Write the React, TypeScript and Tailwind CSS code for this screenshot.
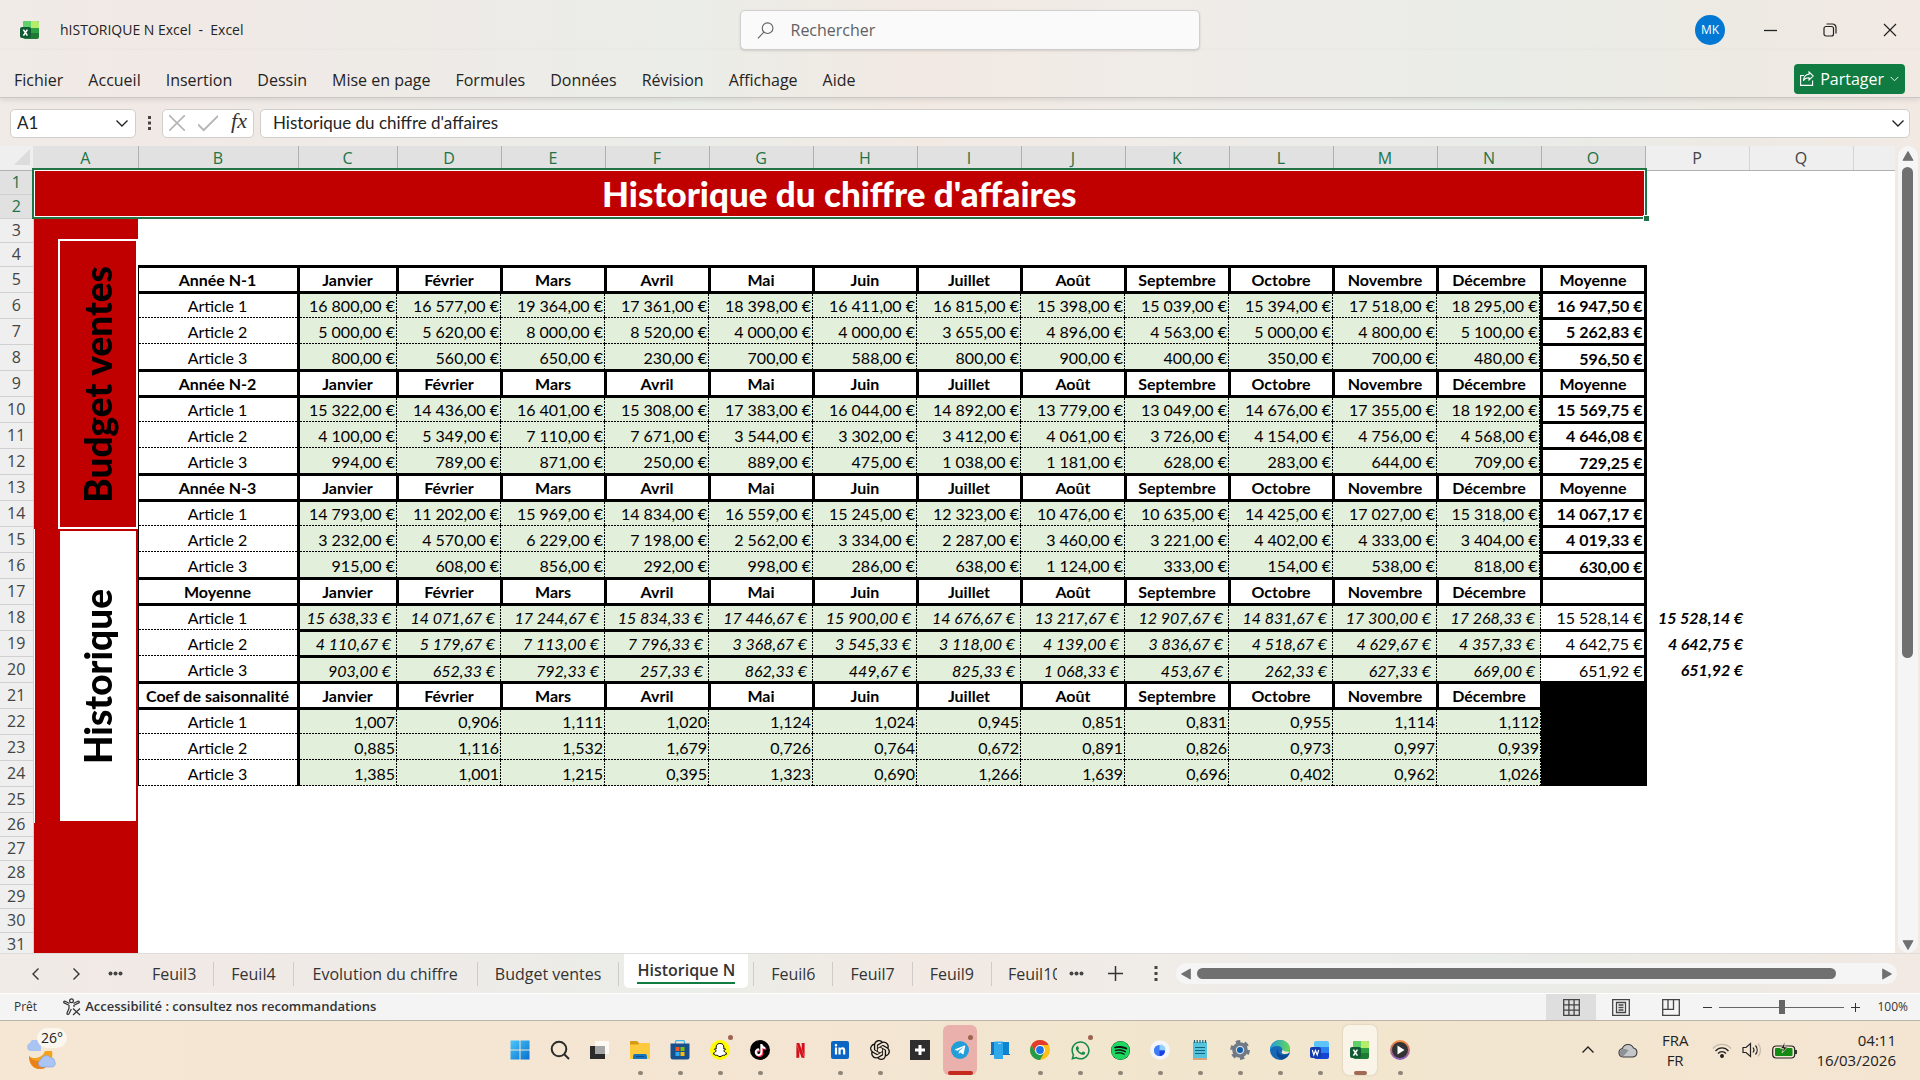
import * as React from 'react';
import clsx from 'clsx';
import { FaLinkedinIn, FaSnapchatGhost, FaSpotify, FaTelegramPlane, FaTiktok, FaWhatsapp } from 'react-icons/fa';
import { SiNetflix, SiOpenai } from 'react-icons/si';

const MENU = ['Fichier', 'Accueil', 'Insertion', 'Dessin', 'Mise en page', 'Formules', 'Données', 'Révision', 'Affichage', 'Aide'];
const LETTERS = 'ABCDEFGHIJKLMNOPQ'.split('');
const MONTHS = ['Janvier', 'Février', 'Mars', 'Avril', 'Mai', 'Juin', 'Juillet', 'Août', 'Septembre', 'Octobre', 'Novembre', 'Décembre'];

type BlockKind = 'year' | 'average' | 'coef';

interface Block {
  title: string;
  kind: BlockKind;
  total: string;
  rows: { values: string; total?: string }[];
}

// values are separated by "|", one per month
const BLOCKS: Block[] = [
  {
    title: 'Année N-1',
    kind: 'year',
    total: 'Moyenne',
    rows: [
      { values: '16 800,00|16 577,00|19 364,00|17 361,00|18 398,00|16 411,00|16 815,00|15 398,00|15 039,00|15 394,00|17 518,00|18 295,00', total: '16 947,50' },
      { values: '5 000,00|5 620,00|8 000,00|8 520,00|4 000,00|4 000,00|3 655,00|4 896,00|4 563,00|5 000,00|4 800,00|5 100,00', total: '5 262,83' },
      { values: '800,00|560,00|650,00|230,00|700,00|588,00|800,00|900,00|400,00|350,00|700,00|480,00', total: '596,50' },
    ],
  },
  {
    title: 'Année N-2',
    kind: 'year',
    total: 'Moyenne',
    rows: [
      { values: '15 322,00|14 436,00|16 401,00|15 308,00|17 383,00|16 044,00|14 892,00|13 779,00|13 049,00|14 676,00|17 355,00|18 192,00', total: '15 569,75' },
      { values: '4 100,00|5 349,00|7 110,00|7 671,00|3 544,00|3 302,00|3 412,00|4 061,00|3 726,00|4 154,00|4 756,00|4 568,00', total: '4 646,08' },
      { values: '994,00|789,00|871,00|250,00|889,00|475,00|1 038,00|1 181,00|628,00|283,00|644,00|709,00', total: '729,25' },
    ],
  },
  {
    title: 'Année N-3',
    kind: 'year',
    total: 'Moyenne',
    rows: [
      { values: '14 793,00|11 202,00|15 969,00|14 834,00|16 559,00|15 245,00|12 323,00|10 476,00|10 635,00|14 425,00|17 027,00|15 318,00', total: '14 067,17' },
      { values: '3 232,00|4 570,00|6 229,00|7 198,00|2 562,00|3 334,00|2 287,00|3 460,00|3 221,00|4 402,00|4 333,00|3 404,00', total: '4 019,33' },
      { values: '915,00|608,00|856,00|292,00|998,00|286,00|638,00|1 124,00|333,00|154,00|538,00|818,00', total: '630,00' },
    ],
  },
  {
    title: 'Moyenne',
    kind: 'average',
    total: '',
    rows: [
      { values: '15 638,33|14 071,67|17 244,67|15 834,33|17 446,67|15 900,00|14 676,67|13 217,67|12 907,67|14 831,67|17 300,00|17 268,33', total: '15 528,14' },
      { values: '4 110,67|5 179,67|7 113,00|7 796,33|3 368,67|3 545,33|3 118,00|4 139,00|3 836,67|4 518,67|4 629,67|4 357,33', total: '4 642,75' },
      { values: '903,00|652,33|792,33|257,33|862,33|449,67|825,33|1 068,33|453,67|262,33|627,33|669,00', total: '651,92' },
    ],
  },
  {
    title: 'Coef de saisonnalité',
    kind: 'coef',
    total: '',
    rows: [
      { values: '1,007|0,906|1,111|1,020|1,124|1,024|0,945|0,851|0,831|0,955|1,114|1,112' },
      { values: '0,885|1,116|1,532|1,679|0,726|0,764|0,672|0,891|0,826|0,973|0,997|0,939' },
      { values: '1,385|1,001|1,215|0,395|1,323|0,690|1,266|1,639|0,696|0,402|0,962|1,026' },
    ],
  },
];

const THICK = 'border-[3px] border-black';
const DASH_BOTTOM =
  'bg-[image:repeating-linear-gradient(90deg,#000_0_2px,transparent_2px_3px)] bg-[size:100%_1px] bg-[position:left_bottom] bg-no-repeat';
const DASH_RIGHT =
  'bg-[image:repeating-linear-gradient(#000_0_2px,transparent_2px_3px)] bg-[size:1px_100%] bg-[position:right_top] bg-no-repeat';
const DASH_BOTH =
  'bg-[image:repeating-linear-gradient(90deg,#000_0_2px,transparent_2px_3px),repeating-linear-gradient(#000_0_2px,transparent_2px_3px)] bg-[size:100%_1px,1px_100%] bg-[position:left_bottom,right_top] bg-no-repeat';

const ICON_BUTTON = 'flex items-center justify-center text-[#333]';

const ExcelLogo: React.FC<{ size: number }> = ({ size }) => (
  <svg width={size} height={size} viewBox="0 0 20 20" aria-hidden="true">
    <rect x="3" y="1" width="16" height="18" rx="2" fill="#1e7a35" />
    <path d="M5 1h6v7H3V3a2 2 0 0 1 2-2z" fill="#5fd06a" />
    <path d="M11 1h6a2 2 0 0 1 2 2v5h-8z" fill="#b5ec6c" />
    <path d="M11 8h8v5h-8z" fill="#2ea043" />
    <rect x="0" y="7" width="11" height="11" rx="2" fill="#0f5c34" />
    <path d="M3.4 9.6l4 6M7.4 9.6l-4 6" stroke="#fff" strokeWidth="1.6" />
  </svg>
);

const Chevron: React.FC<{ d: string; size?: number }> = ({ d, size = 14 }) => (
  <svg width={size} height={size} viewBox="0 0 14 14" fill="none" stroke="currentColor" strokeWidth="1.4" className="shrink-0" aria-hidden="true">
    <path d={d} />
  </svg>
);
const DOWN = 'M1.5 4.5L7 10l5.500-5.500';

const TitleBar = () => (
  <header className="flex h-[50px] items-center pt-2.5 pl-5">
    <div className="flex flex-1 items-center gap-5 text-sm whitespace-pre text-[#242424]">
      <ExcelLogo size={20} />
      <span>{'hISTORIQUE N Excel  -  Excel'}</span>
    </div>
    <label className="flex h-10 w-[460px] items-center gap-4 rounded-[5px] border border-[#d2d0ce] bg-[#fafafa] px-4 shadow-sm">
      <svg width="19" height="19" viewBox="0 0 19 19" fill="none" stroke="#616161" strokeWidth="1.2" aria-hidden="true">
        <circle cx="11.500" cy="7" r="5.800" />
        <path d="M7.500 11.200L1 18" />
      </svg>
      <input type="text" placeholder="Rechercher" aria-label="Rechercher" className="w-full bg-transparent text-base outline-none placeholder:text-[#616161]" />
    </label>
    <div className="flex flex-1 items-center justify-end">
      <button className="mr-[15px] size-[30px] rounded-full bg-[#0078d4] text-xs text-white">MK</button>
      <button aria-label="Réduire" className={clsx(ICON_BUTTON, 'w-[60px]')}>
        <svg width="13" height="13" viewBox="0 0 13 13" stroke="#222" strokeWidth="1.3"><path d="M0 6.500h13" /></svg>
      </button>
      <button aria-label="Restaurer" className={clsx(ICON_BUTTON, 'w-[60px]')}>
        <svg width="14" height="14" viewBox="0 0 14 14" fill="none" stroke="#222" strokeWidth="1.2">
          <rect x="1" y="3.500" width="9.500" height="9.500" rx="2" />
          <path d="M3.500 1h6A3.500 3.500 0 0 1 13 4.500v6" />
        </svg>
      </button>
      <button aria-label="Fermer" className={clsx(ICON_BUTTON, 'w-[60px]')}>
        <svg width="14" height="14" viewBox="0 0 14 14" stroke="#222" strokeWidth="1.2"><path d="M1 1l12 12M13 1L1 13" /></svg>
      </button>
    </div>
  </header>
);

const MenuBar = () => (
  <nav className="flex h-12 items-center justify-between border-b border-[#c9c6c3] pt-3 pr-[15px] pl-[14px] shadow-[0_2px_5px_rgba(0,0,0,0.1)]">
    <div className="flex gap-[25px] text-base text-[#242424]">
      {MENU.map((label) => (
        <button key={label}>{label}</button>
      ))}
    </div>
    <button className="mb-0.5 flex h-[30px] items-center gap-1.5 rounded bg-[#107c41] px-1.5 text-base text-white">
      <svg width="14" height="15" viewBox="0 0 14 15" fill="none" stroke="currentColor" strokeWidth="1.1" aria-hidden="true">
        <path d="M4 4.500H.6v9.900h12V9.500" />
        <path d="M9 1l4.300 4L9 9V6.800c-2.800 0-4.500 1-5.600 3C3.700 6 5.500 3.500 9 3.200z" />
      </svg>
      Partager
      <Chevron d="M1 4.500L7 10.500 13 4.500" size={9} />
    </button>
  </nav>
);

const FormulaBar = () => (
  <div className="flex h-12 items-center gap-1.5 px-[10px] pt-0.5 font-[Lato,sans-serif] text-[17px] text-[#242424]">
    <div className="flex h-[29px] w-[126px] items-center rounded-[5px] border border-[#d0cecb] bg-white px-1.5">
      <input aria-label="Zone Nom" defaultValue="A1" className="w-full min-w-0 bg-transparent outline-none" />
      <Chevron d={DOWN} />
    </div>
    <svg width="14" height="16" viewBox="0 0 14 16" fill="#444" aria-hidden="true">
      <path d="M6 1h3v3H6zM6 6.500h3v3H6zM6 12h3v3H6z" />
    </svg>
    <div className="flex h-[29px] w-[92px] items-center justify-between rounded-[5px] border border-[#d0cecb] bg-white px-1.5">
      <button aria-label="Annuler" className="text-[#b5b5b5]">
        <Chevron d="M0 0l14 14M14 0L0 14" size={16} />
      </button>
      <button aria-label="Entrer" className="text-[#b5b5b5]">
        <Chevron d="M0 8l4 4L14 2" size={20} />
      </button>
      <button aria-label="Insérer une fonction" className="pb-1 font-['Liberation_Serif',serif] text-[22px] leading-5 text-[#333] italic">
        fx
      </button>
    </div>
    <div className="flex h-[29px] flex-1 items-center rounded-[5px] border border-[#d0cecb] bg-white pr-1 pl-3">
      <input
        aria-label="Barre de formule"
        defaultValue="Historique du chiffre d'affaires"
        className="w-full bg-transparent outline-none"
      />
      <Chevron d={DOWN} />
    </div>
  </div>
);

const RowNumber: React.FC<{ n: number }> = ({ n }) => (
  <th
    scope="row"
    className={clsx(
      "border-r border-b border-[#d0d0d0] text-center font-['Open_Sans',sans-serif] text-base leading-5 font-normal",
      n < 3 ? 'bg-[#e1e1e1] text-[#217346]' : 'bg-[#efefef] text-[#444]',
    )}
  >
    {n}
  </th>
);

const BlockRows: React.FC<{ block: Block; start: number }> = ({ block, start }) => {
  const { kind } = block;
  const euro = kind === 'coef' ? '' : ' €';
  return (
    <>
      <tr className="h-[26px]">
        <RowNumber n={start} />
        <td className="bg-[#c00000]" />
        <th scope="col" className={clsx(THICK, 'border-l')}>{block.title}</th>
        {MONTHS.map((month) => (
          <th key={month} scope="col" className={THICK}>{month}</th>
        ))}
        <th scope="col" className={clsx(THICK, kind === 'coef' && 'bg-black')}>{block.total}</th>
      </tr>
      {block.rows.map((row, i) => {
        const last = i === 2;
        const pad = last && kind !== 'coef' && 'pt-0.5';
        return (
          <tr key={i} className="h-[26px]">
            <RowNumber n={start + i + 1} />
            <td className="bg-[#c00000]" />
            <th scope="row" className={clsx('border-r-[3px] border-l border-black font-normal', pad, (!last || kind === 'coef') && DASH_BOTTOM)}>
              Article {i + 1}
            </th>
            {row.values.split('|').map((value, m) => (
              <td
                key={m}
                className={clsx(
                  'border-black bg-[#e2efda] text-right',
                  kind === 'average' ? 'border-b-[3px] pr-1.5 italic' : 'pr-0.5',
                  m === 11 && kind === 'year' && 'border-r-[3px]',
                  kind === 'average' || (last && kind === 'year') ? DASH_RIGHT : DASH_BOTH,
                  pad,
                )}
              >
                {value + euro}
              </td>
            ))}
            <td
              className={clsx(
                'border-r-[3px] border-black pr-px text-right',
                kind === 'coef' ? 'bg-black' : 'border-b-[3px]',
                kind === 'year' && 'font-bold',
                pad,
              )}
            >
              {row.total && row.total + ' €'}
            </td>
            {kind === 'average' && <td className="pr-1.5 text-right font-bold italic">{row.total} €</td>}
          </tr>
        );
      })}
    </>
  );
};

const SHAPE_TEXT = 'rotate-180 font-[Lato,sans-serif] text-[37px] leading-10 font-black [writing-mode:vertical-rl]';

const Sheet = () => (
  <div className="relative flex-1 overflow-hidden bg-white">
    <table className="w-full table-fixed border-collapse font-[Lato,sans-serif] text-base leading-[19px] whitespace-nowrap text-black">
      <colgroup>
        <col className="w-[33px]" />
        <col className="w-[105px]" />
        <col className="w-[160px]" />
        <col className="w-[99px]" />
        {LETTERS.slice(3).map((l) => (
          <col key={l} className="w-[104px]" />
        ))}
        <col />
      </colgroup>
      <thead>
        <tr className="h-6">
          <th className="border-b border-[#b0b0b0] bg-[#efefef]">
            <svg width="16" height="17" viewBox="0 0 16 17" className="ml-3.5" aria-hidden="true">
              <path d="M16 0v16H0z" fill="#dcdcdc" />
            </svg>
          </th>
          {LETTERS.map((l) => (
            <th
              key={l}
              scope="col"
              className={clsx(
                "border-r border-b border-[#b0b0b0] font-['Open_Sans',sans-serif] leading-5 font-normal",
                l < 'P' ? 'bg-[#e1e1e1] text-[#217346]' : 'border-r-[#d4d4d4] bg-[#efefef] text-[#444]',
              )}
            >
              {l}
            </th>
          ))}
          <th className="border-b border-[#b0b0b0] bg-[#efefef]" />
        </tr>
      </thead>
      <tbody>
        <tr className="h-6">
          <RowNumber n={1} />
          <td colSpan={15} rowSpan={2} className="bg-[#c00000] pb-0.5 text-center text-[35px] leading-10 font-black text-white">
            Historique du chiffre d'affaires
          </td>
        </tr>
        <tr className="h-6">
          <RowNumber n={2} />
        </tr>
        {[3, 4].map((n) => (
          <tr key={n} className="h-6">
            <RowNumber n={n} />
            <td className="bg-[#c00000]" />
          </tr>
        ))}
        {BLOCKS.map((block, b) => (
          <BlockRows key={block.title} block={block} start={5 + b * 4} />
        ))}
        {[25, 26, 27, 28, 29, 30, 31].map((n) => (
          <tr key={n} className={n === 25 ? 'h-[26px]' : 'h-6'}>
            <RowNumber n={n} />
            <td className="bg-[#c00000]" />
          </tr>
        ))}
      </tbody>
    </table>

    {/* selection frame of the merged title cell */}
    <div className="absolute top-[22px] left-8 h-[51px] w-[1615px] border-2 border-[#217346]">
      <div className="h-full border border-white" />
      <span className="absolute -right-1 -bottom-1 size-[6px] border-t border-l border-white bg-[#217346]" />
    </div>

    {/* text boxes floating over column A */}
    <div className="absolute top-[93px] left-[58px] flex h-[290px] w-20 items-center justify-center border-2 border-white bg-[#c00000]">
      <span className={SHAPE_TEXT}>Budget ventes</span>
    </div>
    <div className="absolute top-[385px] left-[60px] flex h-[290px] w-[76px] items-center justify-center bg-white">
      <span className={SHAPE_TEXT}>Historique</span>
    </div>
    <div className="absolute top-[383px] left-[34px] h-[294px] w-px bg-white" />
  </div>
);

const Triangle: React.FC<{ d: string }> = ({ d }) => (
  <svg width="12" height="12" viewBox="0 0 10 10" fill="#707070" stroke="#707070" strokeLinejoin="round" aria-hidden="true">
    <path d={d} />
  </svg>
);

const VerticalScroll = () => (
  <div className="flex w-[25px] justify-center">
    <div className="flex w-5 flex-col items-center rounded-full bg-[#f5f5f5] pt-1 pb-0.5">
      <Triangle d="M5 1.500l4 7H1z" />
      <div className="mt-[5px] h-[491px] w-[11px] rounded-full bg-[#707070]" />
      <div className="flex-1" />
      <Triangle d="M5 8.500l4-7H1z" />
    </div>
  </div>
);

const Tab: React.FC<{ label: string }> = ({ label }) => (
  <button className="flex h-full shrink-0 items-center px-[17px]">{label}</button>
);
const Divider = () => <span className="h-6 w-px bg-[#cfcbc7]" />;

const Dots: React.FC = () => (
  <svg width="15" height="5" viewBox="0 0 15 5" fill="#444" aria-hidden="true">
    <circle cx="2.500" cy="2.500" r="2" />
    <circle cx="7.500" cy="2.500" r="2" />
    <circle cx="12.500" cy="2.500" r="2" />
  </svg>
);

const SheetTabs = () => (
  <div className="flex h-10 items-center border-t border-[#e0dcd9] pr-[23px] text-base text-[#333]">
    <div className="flex w-[135px] items-center justify-between pr-3 pl-[29px]">
      <button aria-label="Feuille précédente"><Chevron d="M9.500 1.500L4 7l5.500 5.500" /></button>
      <button aria-label="Feuille suivante"><Chevron d="M4.500 1.500L10 7l-5.500 5.500" /></button>
      <button aria-label="Autres feuilles"><Dots /></button>
    </div>
    <Tab label="Feuil3" />
    <Divider />
    <Tab label="Feuil4" />
    <Divider />
    <div className="flex h-full px-0.5"><Tab label="Evolution du chiffre" /></div>
    <Divider />
    <Tab label="Budget ventes" />
    <Divider />
    <button className="mx-[5px] flex h-[34px] items-center self-start rounded-b-[5px] bg-white px-[13px] font-semibold">
      <span className="border-b-2 border-[#107c41] leading-6">Historique N</span>
    </button>
    <Divider />
    <Tab label="Feuil6" />
    <Divider />
    <Tab label="Feuil7" />
    <Divider />
    <Tab label="Feuil9" />
    <Divider />
    <button className="ml-4 w-[49px] shrink-0 overflow-hidden text-left">Feuil10</button>
    <button aria-label="Liste des feuilles" className="ml-3"><Dots /></button>
    <button aria-label="Nouvelle feuille" className="ml-6">
      <Chevron d="M7 0v14M0 7h14" size={15} />
    </button>
    <svg width="4" height="16" viewBox="0 0 4 16" fill="#444" className="ml-[31px]" aria-hidden="true">
      <path d="M.5 0h3v3h-3zM.5 6h3v3h-3zM.5 12h3v3h-3z" />
    </svg>
    <div className="ml-[18px] flex h-[21px] flex-1 items-center rounded-full bg-[#f5f5f5] px-1">
      <Triangle d="M1.500 5l7-4v8z" />
      <div className="mr-[45px] ml-[5px] h-[11px] flex-1 rounded-full bg-[#707070]" />
      <Triangle d="M8.500 5l-7-4v8z" />
    </div>
  </div>
);

const StatusBar = () => (
  <footer className="flex h-[27px] items-center border-t border-white bg-[#f4f4f4] pr-3 pl-[14px] text-xs text-[#333]">
    <span>Prêt</span>
    <svg width="18" height="18" viewBox="0 0 18 18" fill="none" stroke="#333" strokeWidth="1.200" className="mr-1 ml-[26px]" aria-hidden="true">
      <circle cx="8.500" cy="2.800" r="1.900" />
      <path d="M6.500 5.500L2.200 3.200c-1.400-.5-2 1.200-1 1.700L6 7.300v3L4 15c-.4 1.500 1.400 2 2 .8L8.300 11M10.500 5.500l4.300-2.300c1.400-.5 2 1.200 1 1.700L11 7.300V9" />
      <path d="M10 10.500l7 6.500M17 10.500L10 17" />
    </svg>
    <button className="flex-1 text-left text-[13px] font-semibold">Accessibilité : consultez nos recommandations</button>
    <button aria-label="Normal" className="flex h-full w-[50px] items-center justify-center bg-[#dedede]">
      <svg width="17" height="17" viewBox="0 0 17 17" fill="none" stroke="#444" strokeWidth="1.300">
        <path d="M.7.7h15.600v15.600H.7zM5.900.7v15.600M11.100.7v15.600M.7 5.900h15.600M.7 11.100h15.600" />
      </svg>
    </button>
    <button aria-label="Mise en page" className="flex h-full w-[50px] items-center justify-center">
      <svg width="18" height="17" viewBox="0 0 18 17" fill="none" stroke="#444" strokeWidth="1.300">
        <path d="M.7.7h16.600v15.600H.7zM4.500 3.500h9v10h-9zM6.500 6h5M6.500 8.500h5M6.500 11h5" />
      </svg>
    </button>
    <button aria-label="Aperçu des sauts de page" className="flex h-full w-[50px] items-center justify-center">
      <svg width="18" height="17" viewBox="0 0 18 17" fill="none" stroke="#444" strokeWidth="1.300">
        <path d="M.7.7h16.600v15.600H.7zM.7 10.300h10.800V.7M6 .7v9.600" />
      </svg>
    </button>
    <button aria-label="Zoom arrière" className="ml-1.5">
      <svg width="11" height="11" viewBox="0 0 11 11" stroke="#333"><path d="M1 5.500h9" /></svg>
    </button>
    <input
      type="range"
      aria-label="Zoom"
      defaultValue={50}
      className="mx-1.5 h-4 w-[125px] appearance-none bg-[linear-gradient(#666,#666)] bg-[size:100%_1px] bg-center bg-no-repeat [&::-webkit-slider-thumb]:h-3.5 [&::-webkit-slider-thumb]:w-1.5 [&::-webkit-slider-thumb]:appearance-none [&::-webkit-slider-thumb]:bg-[#666]"
    />
    <button aria-label="Zoom avant">
      <svg width="11" height="11" viewBox="0 0 11 11" stroke="#333"><path d="M1 5.500h9M5.500 1v9" /></svg>
    </button>
    <span className="ml-4">100%</span>
  </footer>
);

interface AppEntry {
  name: string;
  icon: React.ReactNode;
  running?: boolean;
  badge?: boolean;
  state?: 'alert' | 'active';
}

const round = (bg: string, icon: React.ReactNode) => (
  <span className={clsx('flex size-5 items-center justify-center rounded-full', bg)}>{icon}</span>
);

const APPS: AppEntry[] = [
  {
    name: 'Démarrer',
    icon: (
      <svg width="20" height="20" viewBox="0 0 20 20">
        <defs>
          <linearGradient id="win" x1="0" y1="0" x2="1" y2="1"><stop stopColor="#4cc8fb" /><stop offset="1" stopColor="#0670cf" /></linearGradient>
        </defs>
        <path d="M.5.500h9v9h-9zM10.500.500h9v9h-9zM.5 10.500h9v9h-9zM10.500 10.500h9v9h-9z" fill="url(#win)" />
      </svg>
    ),
  },
  {
    name: 'Rechercher',
    icon: (
      <svg width="20" height="20" viewBox="0 0 20 20" fill="none" stroke="#2b2b2b" strokeWidth="2">
        <circle cx="9" cy="9" r="7.300" />
        <path d="M14 14l5 5" />
      </svg>
    ),
  },
  {
    name: 'Vue des tâches',
    icon: (
      <svg width="20" height="20" viewBox="0 0 20 20">
        <path d="M0 6h15v13H0z" fill="#2b2b2b" />
        <path d="M5 1h14v13H5z" fill="#fff" opacity=".8" />
        <path d="M5 6h10v8H5z" fill="#a5a5a5" />
      </svg>
    ),
  },
  {
    name: 'Explorateur de fichiers',
    running: true,
    icon: (
      <svg width="20" height="20" viewBox="0 0 20 20">
        <path d="M0 2a1 1 0 0 1 1-1h6l2 2h10v5H0z" fill="#d99a13" />
        <path d="M0 4.500h8l1.500-1.500H19a1 1 0 0 1 1 1V19H0z" fill="#fdc93d" />
        <path d="M3 19v-3a2 2 0 0 1 2-2h10a2 2 0 0 1 2 2v3z" fill="#1673bd" />
        <path d="M6 16.500h8" stroke="#0b4d85" />
      </svg>
    ),
  },
  {
    name: 'Microsoft Store',
    running: true,
    icon: (
      <svg width="20" height="20" viewBox="0 0 20 20">
        <path d="M5.500 5V1.700a1 1 0 0 1 1-1h7a1 1 0 0 1 1 1V5" stroke="#3ab7ea" fill="none" strokeWidth="1.300" />
        <path d="M.5 3.500h19V17a2.500 2.500 0 0 1-2.500 2.500H3A2.500 2.500 0 0 1 .5 17z" fill="#17508f" />
        <path d="M5.500 7h4v4h-4z" fill="#f35325" />
        <path d="M10.500 7h4v4h-4z" fill="#81bc06" />
        <path d="M5.500 12h4v4h-4z" fill="#29aaf0" />
        <path d="M10.500 12h4v4h-4z" fill="#ffba08" />
      </svg>
    ),
  },
  {
    name: 'Snapchat',
    running: true,
    badge: true,
    icon: round('bg-[#fffc00]', <FaSnapchatGhost size={14} color="#fff" className="[&_path]:stroke-black [&_path]:stroke-[36px]" />),
  },
  {
    name: 'TikTok',
    running: true,
    icon: round('bg-black', <FaTiktok size={12} color="#fff" className="drop-shadow-[1px_1px_0_#fe2c55]" />),
  },
  { name: 'Netflix', icon: <SiNetflix size={15} color="#d3101b" /> },
  {
    name: 'LinkedIn',
    running: true,
    icon: <span className="flex size-[18px] items-center justify-center rounded-[2px] bg-[#0a66c2]"><FaLinkedinIn size={12} color="#fff" /></span>,
  },
  { name: 'ChatGPT', running: true, icon: <SiOpenai size={20} color="#111" /> },
  {
    name: 'Ajouter',
    icon: (
      <svg width="20" height="20" viewBox="0 0 20 20">
        <path d="M0 0h20v20H0z" fill="#2e2e2e" />
        <path d="M10 5v10M5 10h10" stroke="#fff" strokeWidth="3" />
      </svg>
    ),
  },
  {
    name: 'Telegram',
    badge: true,
    state: 'alert',
    icon: <span className="flex size-[18px] items-center justify-center rounded-full bg-[#229ed9]"><FaTelegramPlane size={12} color="#fff" /></span>,
  },
  {
    name: 'Mobile connecté',
    icon: (
      <svg width="20" height="20" viewBox="0 0 20 20">
        <path d="M1 2h18v12h1v1H0v-1h1z" fill="#1673bd" />
        <path d="M5 1.500h8V19H5a1 1 0 0 1-1-1V2.500a1 1 0 0 1 1-1z" fill="#2fa9ea" />
        <path d="M13 2h6v12h-6z" fill="#0d84d0" />
        <path d="M8 3.500h3" stroke="#a4e2ff" />
      </svg>
    ),
  },
  {
    name: 'Chrome',
    running: true,
    icon: (
      <svg width="20" height="20" viewBox="0 0 20 20">
        <circle cx="10" cy="10" r="10" fill="#fbc116" />
        <path d="M1.340 5A10 10 0 0 1 18.660 5H10L5.670 12.500z" fill="#e33b2e" />
        <path d="M1.340 5A10 10 0 0 0 10 20l4.330-7.500H5.670z" fill="#249a4b" />
        <circle cx="10" cy="10" r="4.900" fill="#fff" />
        <circle cx="10" cy="10" r="3.900" fill="#1a73e8" />
      </svg>
    ),
  },
  { name: 'WhatsApp', running: true, badge: true, icon: <FaWhatsapp size={21} color="#158a4c" /> },
  {
    name: 'Spotify',
    running: true,
    icon: <span className="rounded-full bg-[#111]"><FaSpotify size={19} color="#1ed760" /></span>,
  },
  {
    name: 'Données mobiles',
    running: true,
    icon: (
      <svg width="20" height="20" viewBox="0 0 20 20">
        <circle cx="10" cy="10" r="9.800" fill="#f3f5fb" />
        <circle cx="9.500" cy="10.500" r="5.500" fill="#86c5ff" />
        <path d="M4 10.500a5.500 5.500 0 0 0 11 0H9.500V5A5.500 5.500 0 0 0 4 10.500z" fill="#3f7cf5" />
        <path d="M9.500 10.500H15a5.500 5.500 0 0 1-5.500 5.500z" fill="#1d3fe0" />
        <path d="M10.500 4.500a5 5 0 0 1 5 5h-5z" fill="#8fd4ff" />
      </svg>
    ),
  },
  {
    name: 'Bloc-notes',
    running: true,
    icon: (
      <svg width="16" height="20" viewBox="0 0 16 20">
        <path d="M1 2h14v16H1z" fill="#56c3dd" />
        <path d="M2.500 0v3M5.200 0v3M8 0v3M10.800 0v3M13.500 0v3" stroke="#14637f" strokeWidth="1.200" />
        <path d="M3 7.500h10M3 10.500h10M3 13.500h10" stroke="#14637f" strokeWidth="1.200" />
        <path d="M1 19h14" stroke="#c4602a" />
      </svg>
    ),
  },
  {
    name: 'Paramètres',
    running: true,
    icon: (
      <svg width="20" height="20" viewBox="0 0 20 20">
        <circle cx="10" cy="10" r="8.300" fill="none" stroke="#6f7a86" strokeWidth="3.200" strokeDasharray="4.300 4.400" />
        <circle cx="10" cy="10" r="6" fill="#d7dbe0" stroke="#6f7a86" strokeWidth="3.600" />
        <circle cx="10" cy="10" r="3" fill="#0f5fae" />
      </svg>
    ),
  },
  {
    name: 'Edge',
    running: true,
    icon: (
      <svg width="20" height="20" viewBox="0 0 20 20">
        <defs>
          <linearGradient id="edgeTop"><stop stopColor="#1d9be2" /><stop offset="1" stopColor="#67d954" /></linearGradient>
        </defs>
        <circle cx="10" cy="10" r="10" fill="#1769b8" />
        <path d="M0 9.500C.5 4 4.800 0 10 0c5.800 0 10 4.200 10 8.500 0 3.500-2.700 5.500-5.500 5.500-2.200 0-3.300-1-2.800-1.700 1.800-2.300.3-6.300-4-6.300C4 6 1 7.500 0 9.500z" fill="url(#edgeTop)" />
        <path d="M20 12.500c-2 2.500-5 3.300-8 2.500-3-.8-4.700-3.300-4-6.500-2.700 3.500-1.500 9 3.500 11.300 3.700-.5 7-3.200 8.500-7.300z" fill="#0c4a94" />
        <path d="M20 11.500c-1 1.700-3 2.500-5.500 2.500-2.200 0-3.300-1-2.800-1.700 1-1.300 1-3.200-.2-4.600 1 3.600 4 4.600 8.500 3.800z" fill="#f3e6d3" />
      </svg>
    ),
  },
  {
    name: 'Word',
    running: true,
    icon: (
      <svg width="20" height="20" viewBox="0 0 20 20">
        <path d="M6 1h11a2 2 0 0 1 2 2v4H4V3a2 2 0 0 1 2-2z" fill="#5cc4fb" />
        <path d="M4 7h15v6H4z" fill="#2b82ee" />
        <path d="M4 13h15v4a2 2 0 0 1-2 2H6a2 2 0 0 1-2-2z" fill="#1745d3" />
        <rect x="0" y="7" width="11" height="11" rx="2" fill="#123bb0" />
        <path d="M2.300 10l1.500 5 1.700-4.500 1.700 4.500 1.500-5" stroke="#fff" strokeWidth="1.200" fill="none" />
      </svg>
    ),
  },
  { name: 'Excel', state: 'active', icon: <ExcelLogo size={20} /> },
  {
    name: 'Lecteur multimédia',
    running: true,
    icon: (
      <svg width="20" height="20" viewBox="0 0 20 20">
        <defs>
          <linearGradient id="media" x1="0" y1="0" x2="0" y2="1"><stop stopColor="#f58a3c" /><stop offset="1" stopColor="#8a5cc0" /></linearGradient>
        </defs>
        <circle cx="10" cy="10" r="9" fill="#333" stroke="url(#media)" strokeWidth="2" />
        <path d="M7.500 5.500l7 4.500-7 4.500z" fill="#fff" />
      </svg>
    ),
  },
];

const TaskbarButton: React.FC<{ app: AppEntry }> = ({ app }) => (
  <button
    aria-label={app.name}
    className={clsx(
      'relative mx-[3px] flex h-[50px] w-[34px] items-center justify-center rounded-md',
      app.state === 'alert' && 'bg-[#eab0ab]',
      app.state === 'active' && 'bg-[#faf3e8] shadow-[0_0_2px_rgba(0,0,0,0.2)]',
    )}
  >
    {app.icon}
    {app.badge && <span className="absolute top-2.5 right-1 size-[5px] rounded-full bg-[#9c6450]" />}
    {app.running && <span className="absolute bottom-0 h-1 w-[5px] rounded-full bg-[#8d8578]" />}
    {app.state === 'alert' && <span className="absolute bottom-0 h-1 w-[25px] rounded-full bg-[#c42b1c]" />}
    {app.state === 'active' && <span className="absolute bottom-0 h-1 w-[13px] rounded-full bg-[#a06a54]" />}
  </button>
);

const Weather = () => (
  <button aria-label="Météo" className="relative ml-[26px] h-11 w-10">
    <svg width="34" height="32" viewBox="0 0 34 32" className="absolute bottom-0 left-0" aria-hidden="true">
      <path d="M3 16c4 4 14 2 16-5h7c2 10-4 18-13 18C7 29 3 24 3 16z" fill="#f6a21d" />
      <path d="M3 16c3 5 9 6 14 4l2 8c-8 3-16-2-16-12z" fill="#e9801c" />
      <path d="M4 11a4.200 4.200 0 0 1 0-8 6 6 0 0 1 11-1v9z" fill="#a9c4f0" />
      <path d="M15 27a4 4 0 0 1 0-7.500 5.500 5.500 0 0 1 9.500-2A5 5 0 0 1 29 22c1 3-1 5-3 5z" fill="#a9c4f5" stroke="#7fa1e0" strokeWidth=".6" />
    </svg>
    <span className="absolute top-0 left-[11px] rounded-full bg-[#fbf6ee] px-1 text-sm leading-5 text-[#222]">26°</span>
  </button>
);

const Taskbar = () => (
  <div className="grid h-[60px] grid-cols-[1fr_auto_1fr] items-center border-t border-[#bdb5a8] bg-[linear-gradient(90deg,#f5e7d3,#f3e5d2_45%,#f1e6cd_60%,#f4e5d2)] pb-px text-[#222]">
    <Weather />
    <div className="flex">
      {APPS.map((app) => (
        <TaskbarButton key={app.name} app={app} />
      ))}
    </div>
    <div className="flex items-center justify-end pr-6 text-[15px] leading-5">
      <button aria-label="Icônes masquées"><Chevron d="M1.500 9.500L7 4l5.500 5.500" /></button>
      <svg width="20" height="15" viewBox="0 0 20 15" className="ml-[23px]" aria-hidden="true">
        <path d="M5 14a4.300 4.300 0 0 1-.6-8.500A6 6 0 0 1 15.500 5 4.600 4.600 0 0 1 15 14z" fill="#c4c6c9" stroke="#3a3a3a" strokeWidth="1.100" />
        <path d="M5 13.400a3.700 3.700 0 0 1 0-7.300c3-.6 4.500.4 5.500 1.500z" fill="#8e9195" />
      </svg>
      <button className="ml-6 text-center">FRA<br />FR</button>
      <svg width="20" height="15" viewBox="0 0 20 15" fill="none" stroke="#222" strokeWidth="1.300" className="ml-6" aria-hidden="true">
        <path d="M1 5.500C5.500 0 14.500 0 19 5.500" stroke="#c4b9aa" />
        <path d="M3.500 8c3.500-4.200 9.500-4.200 13 0M6 10.500c2.200-2.600 5.800-2.600 8 0" />
        <circle cx="10" cy="13" r="1.300" fill="#222" />
      </svg>
      <svg width="20" height="16" viewBox="0 0 20 16" fill="none" stroke="#222" strokeWidth="1.200" className="ml-[10px]" aria-hidden="true">
        <path d="M1 5.500h3L8.500 1.500v13L4 10.500H1zM11 5.500c1.200 1.500 1.200 3.500 0 5M13.500 3.500c2.200 2.600 2.200 6.400 0 9" />
        <path d="M16 1.500c3.300 3.800 3.300 9.200 0 13" stroke="#c4b9aa" />
      </svg>
      <svg width="26" height="17" viewBox="0 0 26 17" className="ml-[10px]" aria-hidden="true">
        <rect x=".7" y="4" width="22" height="12" rx="3.500" fill="none" stroke="#222" strokeWidth="1.200" />
        <rect x="3" y="6" width="17.500" height="8" rx="1" fill="#138a13" />
        <path d="M24 8v4" stroke="#222" strokeWidth="1.800" />
        <path d="M13 0L8.500 6.500h3L10 11l5.500-6h-3z" fill="#222" stroke="#f4e5d2" strokeWidth=".7" />
      </svg>
      <button className="ml-[18px] text-right">04:11<br />16/03/2026</button>
    </div>
  </div>
);

export default function App() {
  return (
    <div className="flex h-screen flex-col overflow-hidden bg-[linear-gradient(90deg,#f0ebe7,#f1e9e6_8%,#ebede8_36%,#f2e9e3_48%,#f0ece8_60%,#eaece8_78%,#edeae3_90%,#f2e9e3)] font-['Open_Sans',sans-serif]">
      <TitleBar />
      <MenuBar />
      <FormulaBar />
      <main className="flex min-h-0 flex-1">
        <Sheet />
        <VerticalScroll />
      </main>
      <SheetTabs />
      <StatusBar />
      <Taskbar />
    </div>
  );
}
